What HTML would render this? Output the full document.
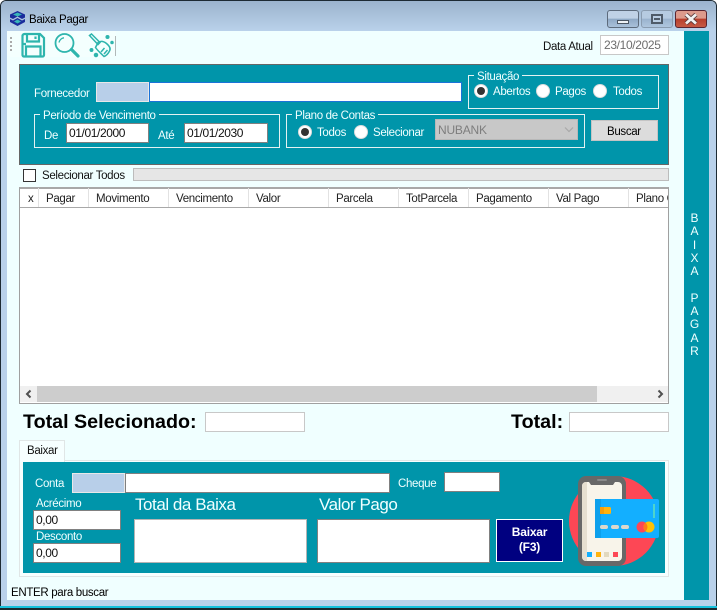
<!DOCTYPE html>
<html><head><meta charset="utf-8"><style>
html,body{margin:0;padding:0;width:717px;height:610px;overflow:hidden;background:#fff}
body{position:relative;font-family:"Liberation Sans",sans-serif;font-size:11.5px;letter-spacing:-.33px;color:#111}
div,span.t{position:absolute;box-sizing:border-box}
.t{white-space:nowrap;line-height:14px;padding-top:1px}
.w{color:#f0ffff}
.teal{background:#0095aa}
.in{background:#fff;border:1px solid #808080;padding:1px 2px;line-height:16px;color:#111;font-size:12px;letter-spacing:-.4px}
.lt{background:#fff;border:1px solid #c8c8c8}
.blue{background:#b8cfe9;border:1px solid #e8e8e8}
.g{border:1px solid #e4f2f2}
.lg{position:absolute;background:#0095aa;padding:1px 3px 0;color:#f0ffff;line-height:14px;white-space:nowrap}
.r{width:14px;height:14px;border-radius:50%;background:#fff;border:1px solid #ddd}
.r.c:after{content:"";position:absolute;left:2px;top:2px;width:8px;height:8px;border-radius:50%;background:#333}
.h{color:#222}
.sep{position:absolute;top:188px;width:1px;height:19px;background:#e2e2e2}
span.big{font-size:17px;line-height:21px;letter-spacing:-.45px;padding-top:0}
span.tot{font-size:19.7px;line-height:22px;font-weight:bold;color:#000;letter-spacing:0;padding-top:0}
</style></head><body>
<!-- window -->
<div style="left:0;top:0;width:717px;height:608px;background:#b9d1ea;border:1px solid #1d2a33;border-bottom:none;border-radius:6px 6px 0 0"></div>
<div style="left:1px;top:1px;width:715px;height:30px;background:linear-gradient(#9bb3cd,#b9d1ea);border-radius:5px 5px 0 0"></div>
<div style="left:0;top:606px;width:717px;height:2px;background:#16c0dc"></div>
<div style="left:0;top:608px;width:717px;height:2px;background:#1c2a30"></div>
<div style="left:7px;top:31px;width:677px;height:569px;background:#f0ffff"></div>
<div style="left:684px;top:31px;width:25px;height:569px;background:#0095aa"></div>

<!-- title -->
<svg style="position:absolute;left:10px;top:11px" width="15" height="15" viewBox="0 0 15 15">
<path d="M7.500 0 15 3.500V6.500L12 8 7.500 5.500 3 8 0 6.500V3.500Z" fill="#1a2c9c"/>
<path d="M0 8 3 9.500 7.500 7 12 9.500 15 8V11L7.500 15 0 11Z" fill="#1a2c9c"/>
<path d="M3 3.500 7.500 1.500 12 3.500 7.500 5.500Z" fill="#38b6b8"/>
<path d="M4 10.500 7.500 8.500 11 10.500 7.500 12.500Z" fill="#38b6b8"/>
</svg>
<span class="t" style="left:29px;top:12px;color:#000">Baixa Pagar</span>
<div style="left:607px;top:10px;width:32px;height:18px;border:1px solid #5d6b7c;border-radius:3px;background:linear-gradient(#c0d2e6 45%,#8fa9c5 50%,#a9c1da)"></div>
<div style="left:617px;top:20px;width:12px;height:4px;background:#eef2f6;border:1px solid #4a5563"></div>
<div style="left:641px;top:10px;width:32px;height:18px;border:1px solid #8a9cb0;border-radius:3px;background:linear-gradient(#b6cbe1 45%,#9ab3ce 50%,#afc6de)"></div>
<div style="left:651px;top:14px;width:12px;height:10px;border:2px solid #4f5b69;background:#b9cde2"></div>
<div style="left:654px;top:18px;width:6px;height:2px;background:#4f5b69"></div>
<div style="left:675px;top:10px;width:32px;height:18px;border:1px solid #5a2530;border-radius:3px;background:linear-gradient(#dd9a8c 45%,#b83f2c 50%,#c65a45)"></div>
<svg style="position:absolute;left:684px;top:13px" width="14" height="12" viewBox="0 0 14 12"><path d="M2 1.500 12 10.500M12 1.500 2 10.500" stroke="#5a3a3a" stroke-width="4.500"/><path d="M2 1.500 12 10.500M12 1.500 2 10.500" stroke="#f2f2f2" stroke-width="2.800"/></svg>

<!-- toolbar -->
<div style="left:7px;top:31px;width:109px;height:26px;background:#f4fffe;border-radius:0 0 5px 5px"></div>
<div style="left:10px;top:37px;width:2px;height:2px;background:#aaa"></div>
<div style="left:10px;top:41px;width:2px;height:2px;background:#aaa"></div>
<div style="left:10px;top:45px;width:2px;height:2px;background:#aaa"></div>
<div style="left:10px;top:49px;width:2px;height:2px;background:#aaa"></div>
<div style="left:115px;top:36px;width:1px;height:20px;background:#b0b8b8"></div>
<svg style="position:absolute;left:20px;top:32px" width="26" height="26" viewBox="0 0 26 26" fill="none" stroke="#2eb5ad" stroke-width="2.200">
<path d="M2.500 4a2 2 0 0 1 2-2H20L24 6V23a1.500 1.500 0 0 1-1.500 1.500H4a1.500 1.500 0 0 1-1.500-1.500Z"/>
<path d="M7 2V9.500H19V2M15.500 4.500V7M6 24.500V14.500H20.500V24.500M2.500 12H6"/>
</svg>
<svg style="position:absolute;left:54px;top:33px" width="26" height="25" viewBox="0 0 26 25" fill="none" stroke="#2eb5ad">
<circle cx="10.500" cy="10" r="9" stroke-width="1.800"/>
<path d="M5 9.500C5.500 7 7.500 5 10 4.800" stroke-width="1.300"/>
<path d="M17.500 16.500 24 23" stroke-width="3.200" stroke-linecap="round"/>
</svg>
<svg style="position:absolute;left:88px;top:33px" width="26" height="25" viewBox="0 0 26 25" fill="none" stroke="#2eb5ad" stroke-width="1.500">
<path d="M1.500 2.500 3.500 1 12 9.500 10 11.500Z"/>
<path d="M10 9.500C13 7.500 15.500 8 18.500 10.500S23 15.500 21.500 18C20 21 17.500 23 16 23.500C13.500 21 9.500 17.500 7.500 14.500Z"/>
<path d="M13 19 16.500 15M16 21 19.500 17"/>
<circle cx="3.500" cy="17" r="1.200" fill="#2eb5ad"/><circle cx="8" cy="22" r="1.500" fill="#2eb5ad"/><circle cx="19.500" cy="4" r="1.300" fill="#2eb5ad"/><circle cx="24" cy="9.500" r="1" fill="#2eb5ad"/>
</svg>
<span class="t" style="left:543px;top:39px">Data Atual</span>
<div class="lt" style="left:600px;top:35px;width:69px;height:20px;color:#6d6d6d;line-height:18px;padding-left:3px;font-size:12px;letter-spacing:-.35px">23/10/2025</div>

<!-- filter panel -->
<div class="teal" style="left:19px;top:64px;width:650px;height:101px;border:1px solid #666"></div>
<span class="t w" style="left:34px;top:86px">Fornecedor</span>
<div class="blue" style="left:96px;top:82px;width:53px;height:20px"></div>
<div style="left:149px;top:82px;width:313px;height:20px;background:#fff;border:1px solid #1a73d8"></div>

<div class="g" style="left:468px;top:75px;width:191px;height:34px"></div>
<span class="lg" style="left:474px;top:69px">Situação</span>
<div class="r c" style="left:474px;top:84px"></div><span class="t w" style="left:493px;top:84px">Abertos</span>
<div class="r" style="left:536px;top:84px"></div><span class="t w" style="left:555px;top:84px">Pagos</span>
<div class="r" style="left:593px;top:84px"></div><span class="t w" style="left:613px;top:84px">Todos</span>

<div class="g" style="left:34px;top:114px;width:246px;height:34px"></div>
<span class="lg" style="left:40px;top:108px">Período de Vencimento</span>
<span class="t w" style="left:44px;top:128px">De</span>
<div class="in" style="left:66px;top:123px;width:83px;height:20px">01/01/2000</div>
<span class="t w" style="left:158px;top:128px">Até</span>
<div class="in" style="left:184px;top:123px;width:84px;height:20px">01/01/2030</div>

<div class="g" style="left:286px;top:114px;width:299px;height:34px"></div>
<span class="lg" style="left:292px;top:108px">Plano de Contas</span>
<div class="r c" style="left:298px;top:125px"></div><span class="t w" style="left:317px;top:125px">Todos</span>
<div class="r" style="left:354px;top:125px"></div><span class="t w" style="left:373px;top:125px">Selecionar</span>
<div style="left:435px;top:119px;width:143px;height:21px;background:#c8c8c8;border:1px solid #b8b8b8"></div>
<span class="t" style="left:438px;top:122px;color:#7e7e7e;font-size:12px;letter-spacing:-.2px">NUBANK</span>
<svg style="position:absolute;left:563px;top:126px" width="12" height="8" viewBox="0 0 12 8"><path d="M2 1.500 6 5.500 10 1.500" fill="none" stroke="#a8a8a8" stroke-width="1.200"/></svg>
<div style="left:591px;top:120px;width:67px;height:21px;background:#dcdcdc;border:1px solid #c4c4c4"></div>
<span class="t" style="left:607px;top:124px;color:#000">Buscar</span>

<!-- select all -->
<div style="left:23px;top:169px;width:13px;height:13px;background:#fff;border:1px solid #333"></div>
<span class="t" style="left:42px;top:168px">Selecionar Todos</span>
<div style="left:133px;top:168px;width:536px;height:13px;background:#e6e6e6;border:1px solid #bcbcbc"></div>

<!-- grid -->
<div style="left:19px;top:187px;width:650px;height:217px;background:#fff;border:1px solid #a0a0a0;border-top:2px solid #a8a8a8"></div>
<div style="left:20px;top:207px;width:648px;height:1px;background:#a8a8a8"></div>
<div class="sep" style="left:38px"></div><div class="sep" style="left:88px"></div><div class="sep" style="left:168px"></div><div class="sep" style="left:248px"></div><div class="sep" style="left:328px"></div><div class="sep" style="left:398px"></div><div class="sep" style="left:468px"></div><div class="sep" style="left:548px"></div><div class="sep" style="left:628px"></div>
<span class="t h" style="left:28px;top:191px">x</span>
<span class="t h" style="left:46px;top:191px">Pagar</span>
<span class="t h" style="left:96px;top:191px">Movimento</span>
<span class="t h" style="left:176px;top:191px">Vencimento</span>
<span class="t h" style="left:256px;top:191px">Valor</span>
<span class="t h" style="left:336px;top:191px">Parcela</span>
<span class="t h" style="left:406px;top:191px">TotParcela</span>
<span class="t h" style="left:476px;top:191px">Pagamento</span>
<span class="t h" style="left:556px;top:191px">Val Pago</span>
<div style="left:636px;top:192px;width:32px;height:14px;overflow:hidden;line-height:14px;white-space:nowrap;color:#222">Plano Contas</div>
<div style="left:20px;top:386px;width:648px;height:16px;background:#f0f0f0"></div>
<div style="left:37px;top:386px;width:560px;height:16px;background:#cdcdcd"></div>
<svg style="position:absolute;left:24px;top:389px" width="10" height="10" viewBox="0 0 10 10"><path d="M6.500 1.500 3 5 6.500 8.500" fill="none" stroke="#505050" stroke-width="2"/></svg>
<svg style="position:absolute;left:655px;top:389px" width="10" height="10" viewBox="0 0 10 10"><path d="M3.500 1.500 7 5 3.500 8.500" fill="none" stroke="#505050" stroke-width="2"/></svg>

<!-- totals -->
<span class="t tot" style="left:23px;top:411px">Total Selecionado:</span>
<div class="lt" style="left:205px;top:412px;width:100px;height:20px"></div>
<span class="t tot" style="left:511px;top:411px">Total:</span>
<div class="lt" style="left:569px;top:412px;width:100px;height:20px"></div>

<!-- tab -->
<div style="left:19px;top:460px;width:650px;height:117px;background:#f6ffff;border:1px solid #e0e6e6"></div>
<div style="left:19px;top:440px;width:46px;height:22px;background:#f6ffff;border:1px solid #e0e6e6;border-bottom:none"></div>
<span class="t" style="left:27px;top:443px">Baixar</span>
<div class="teal" style="left:23px;top:462px;width:642px;height:111px"></div>
<span class="t w" style="left:35px;top:476px">Conta</span>
<div class="blue" style="left:72px;top:473px;width:53px;height:20px"></div>
<div class="in" style="left:125px;top:473px;width:265px;height:20px"></div>
<span class="t w" style="left:398px;top:476px">Cheque</span>
<div class="in" style="left:444px;top:472px;width:56px;height:20px"></div>
<span class="t w" style="left:36px;top:496px">Acrécimo</span>
<div class="in" style="left:33px;top:510px;width:88px;height:20px;padding-left:2px">0,00</div>
<span class="t w" style="left:36px;top:529px">Desconto</span>
<div class="in" style="left:33px;top:543px;width:88px;height:20px;padding-left:2px">0,00</div>
<span class="t w big" style="left:135px;top:494px">Total da Baixa</span>
<div class="in" style="left:134px;top:519px;width:173px;height:44px;border-color:#b4b4b4"></div>
<span class="t w big" style="left:319px;top:494px">Valor Pago</span>
<div class="in" style="left:317px;top:519px;width:173px;height:44px"></div>
<div style="left:496px;top:519px;width:67px;height:43px;background:#000080;border:1px solid #fff;color:#fff;font-weight:bold;text-align:center;line-height:15px;padding-top:5px;font-size:12px;letter-spacing:-.2px">Baixar<br>(F3)</div>

<svg style="position:absolute;left:565px;top:472px" width="98" height="98" viewBox="565 472 98 98">
<circle cx="614" cy="521" r="45" fill="#fd4755"/>
<rect x="578" y="476" width="48" height="90" rx="8" fill="#686868"/>
<path d="M582 486a4 4 0 0 1 4-4h3l2 3h22l2-3h3a4 4 0 0 1 4 4v71a4 4 0 0 1-4 4H586a4 4 0 0 1-4-4Z" fill="#f8f4ea"/>
<path d="M582 486a4 4 0 0 1 4-4h1V561h-1a4 4 0 0 1-4-4Z" fill="#e6dfd0"/>
<rect x="597" y="479" width="10" height="2" rx="1" fill="#8a8a8a"/>
<rect x="595" y="499" width="64" height="39" rx="2" fill="#13afff"/>
<rect x="595" y="499" width="6" height="39" fill="#0da0ec"/>
<rect x="600" y="507" width="11" height="7" rx="1.500" fill="#ffb30f"/>
<rect x="600" y="507" width="4" height="7" fill="#f59e0b"/>
<rect x="653" y="504" width="2" height="14" fill="#4ed4cc"/>
<rect x="600" y="525" width="8" height="4" rx="2" fill="#dcd8cc"/><rect x="611" y="525" width="8" height="4" rx="2" fill="#dcd8cc"/><rect x="621" y="525" width="8" height="4" rx="2" fill="#dcd8cc"/>
<circle cx="642" cy="527" r="5.500" fill="#fd4755"/><circle cx="649" cy="527" r="5.500" fill="#ffc107"/>
<path d="M645.500 522.800a5.500 5.500 0 0 1 0 8.400 5.500 5.500 0 0 1 0-8.400Z" fill="#ff7a1a"/>
<rect x="587" y="552" width="5" height="5" fill="#13afff"/><rect x="596" y="552" width="5" height="5" fill="#ffb30f"/><rect x="604" y="552" width="5" height="5" fill="#e2d9bf"/><rect x="613" y="552" width="5" height="5" fill="#fd4755"/>
</svg>

<span class="t" style="left:11px;top:585px;color:#000">ENTER para buscar</span>

<!-- side label -->
<div class="w" style="left:684px;top:212px;width:21px;text-align:center;font-size:12px;letter-spacing:0;line-height:13.300px;color:#f0ffff">B<br>A<br>I<br>X<br>A<br><br>P<br>A<br>G<br>A<br>R</div>
</body></html>
